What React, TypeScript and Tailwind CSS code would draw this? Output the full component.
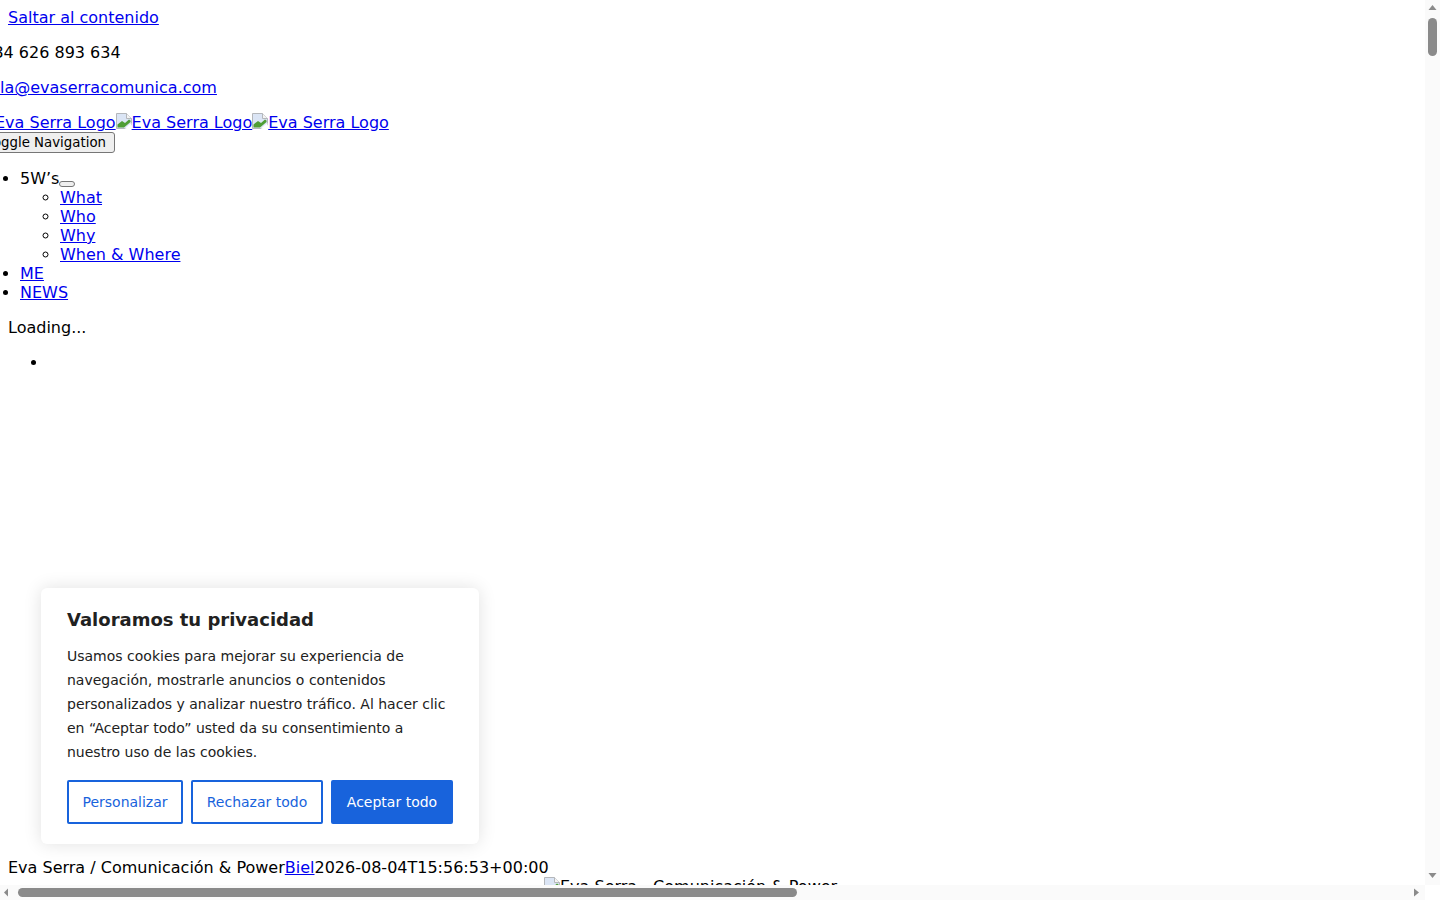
const linkClass = 'text-[#0000ee] underline';

function BrokenImage({ alt, link }: { alt: string; link?: boolean }) {
  return (
    <span className="inline-block">
      <svg width="16" height="16" viewBox="0 0 16 16" className="inline-block align-[-1px]">
        <path d="M0.5 0.5H10.5L15.5 5.5V12L9 15.5H0.5Z" fill="#dbe5f5" stroke="#b4b7bb" />
        <path d="M10.5 0.5V5.5H15.5" fill="#f4f4f4" stroke="#b4b7bb" />
        <path d="M1.5 14.5V11.5L6 8L9 10L13 6.5L14.5 7.5V9L8 14.5Z" fill="#4f9e35" />
        <path d="M8.5 15.5L15.5 10V15.5Z" fill="#ffffff" />
      </svg>
      <span className={link ? 'underline' : ''}>{alt}</span>
    </span>
  );
}

function ScrollArrow({ points }: { points: string }) {
  return (
    <svg width="15" height="15" viewBox="0 0 15 15" className="shrink-0">
      <polygon points={points} fill="#8a8a8a" />
    </svg>
  );
}

export default function App() {
  return (
    <div className="relative flex h-screen w-full flex-col overflow-hidden bg-white font-['DejaVu_Sans',sans-serif] text-base leading-[19px] text-black">
      <div className="flex min-h-0 flex-1">
        <div className="min-w-0 flex-1 overflow-hidden whitespace-nowrap">
          <div className="pt-2 pl-2">
            <a className={linkClass}>Saltar al contenido</a>
          </div>

          <div className="-ml-5">
            <p className="mt-4">+34 626 893 634</p>
            <p className="mt-4">
              <a className={linkClass}>hola@evaserracomunica.com</a>
            </p>
            <p className="mt-4 -ml-px">
              <a className={linkClass}>
                <BrokenImage alt="Eva Serra Logo" link />
                <BrokenImage alt="Eva Serra Logo" link />
                <BrokenImage alt="Eva Serra Logo" link />
              </a>
            </p>
            <button className="block h-[21px] rounded-[3px] border border-[#767676] bg-[#efefef] pr-2 pl-[6px] text-[13.333px] leading-[15px]">
              Toggle Navigation
            </button>

            <ul className="mt-4 list-disc pl-10">
              <li>
                5W’s
                <button className="inline-block h-[6px] w-4 rounded-[3px] border border-[#767676] bg-[#efefef] align-[-2px]" />
                <ul className="list-[circle] pl-10">
                  <li><a className={linkClass}>What</a></li>
                  <li><a className={linkClass}>Who</a></li>
                  <li><a className={linkClass}>Why</a></li>
                  <li><a className={linkClass}>When &amp; Where</a></li>
                </ul>
              </li>
              <li><a className={linkClass}>ME</a></li>
              <li><a className={linkClass}>NEWS</a></li>
            </ul>
          </div>

          <div className="mt-4 pl-2">Loading...</div>
          <ul className="mt-4 ml-2 h-[505px] list-disc pl-10">
            <li></li>
          </ul>

          <div className="pl-2">
            Eva Serra / Comunicación &amp; Power<a className={linkClass}>Biel</a>2026-08-04T15:56:53+00:00
          </div>
          <div className="pl-[544px]">
            <BrokenImage alt="Eva Serra - Comunicación & Power" />
          </div>
        </div>

        {/* vertical scrollbar */}
        <div className="flex w-[15px] flex-col items-center bg-[#fafafa]">
          <ScrollArrow points="3.5,10 7.5,5 11.5,10" />
          <div className="mt-[3px] h-[38px] w-[9px] rounded-full bg-[#8a8a8a]" />
          <div className="flex-1" />
          <ScrollArrow points="3.5,3 11.5,3 7.5,8" />
        </div>
      </div>

      {/* horizontal scrollbar */}
      <div className="flex h-[15px] items-center">
        <div className="flex min-w-0 flex-1 items-center bg-[#fafafa]">
          <ScrollArrow points="8,3.5 8,11.5 4,7.5" />
          <div className="ml-[3px] h-[9px] w-[779px] rounded-full bg-[#8a8a8a]" />
          <div className="flex-1" />
          <ScrollArrow points="4,3.5 4,11.5 9,7.5" />
        </div>
        <div className="h-[15px] w-[15px] bg-white" />
      </div>

      {/* cookie banner */}
      <div className="absolute top-[588px] left-[41px] w-[438px] rounded-[6px] bg-white px-[26px] pt-[20px] pb-[20px] text-[#212121] whitespace-normal shadow-[0_0_18px_rgba(0,0,0,0.12)]">
        <p className="text-[18px] leading-[24px] font-bold">Valoramos tu privacidad</p>
        <p className="mt-[12px] text-[14px] leading-[24px]">
          Usamos cookies para mejorar su experiencia de navegación, mostrarle anuncios o contenidos personalizados y analizar nuestro tráfico. Al hacer clic en “Aceptar todo” usted da su consentimiento a nuestro uso de las cookies.
        </p>
        <div className="mt-[16px] flex gap-2 text-[14px]">
          <button className="h-[44px] w-[116px] rounded-[2px] border-2 border-[#1863dc] text-[#1863dc]">Personalizar</button>
          <button className="h-[44px] w-[132px] rounded-[2px] border-2 border-[#1863dc] text-[#1863dc]">Rechazar todo</button>
          <button className="h-[44px] w-[122px] rounded-[2px] border-2 border-[#1863dc] bg-[#1863dc] text-white">Aceptar todo</button>
        </div>
      </div>
    </div>
  );
}
